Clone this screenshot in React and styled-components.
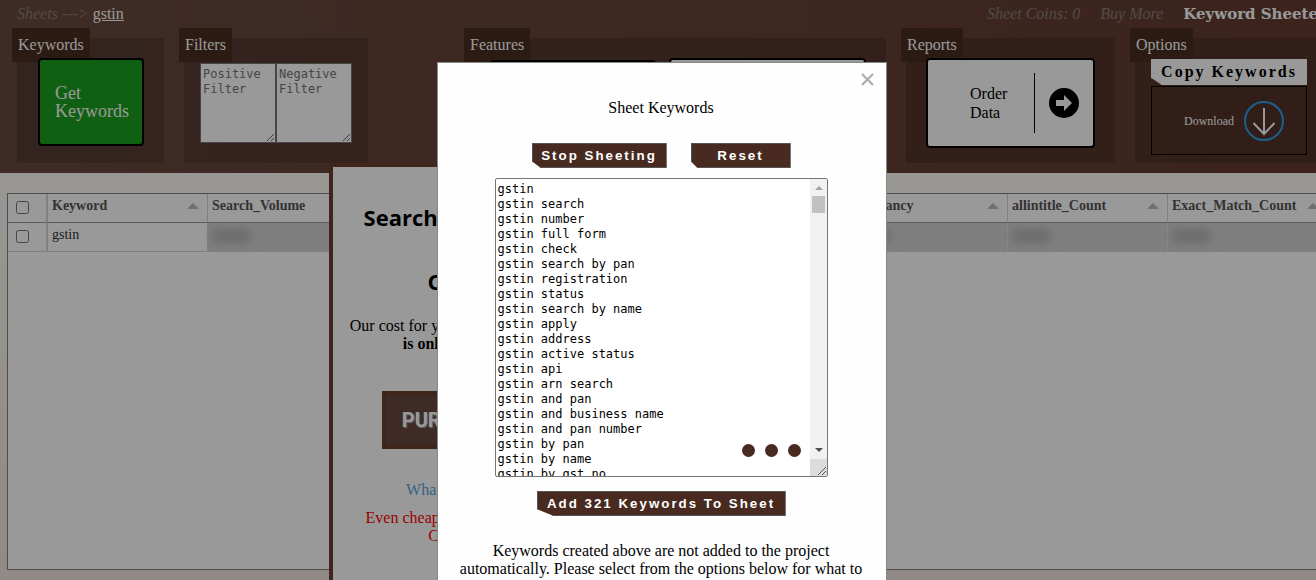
import React from "react";
import styled, { createGlobalStyle, css } from "styled-components";

const SERIF = '"Liberation Serif", serif';
const SANS = '"Liberation Sans", sans-serif';
const MONO = '"DejaVu Sans Mono", monospace';
const BROWN = "#482a20";

const GlobalStyle = createGlobalStyle`
  * { box-sizing: border-box; }
  html, body { margin: 0; height: 100%; }
  body {
    overflow: hidden;
    font: 16px/18px ${SERIF};
    color: #000;
  }
  #root { height: 100%; }
  p, h2 { margin: 0; }
`;

const Page = styled.div`
  position: relative;
  display: flex;
  flex-direction: column;
  min-height: 100%;
  overflow: hidden;
  background: linear-gradient(to bottom, #fffcf6 30%, #f2e6e0);
`;

const Header = styled.header`
  padding-bottom: 10px;
  background: linear-gradient(100deg, #69493f, #643c30);
`;

const TopBar = styled.div`
  display: flex;
  align-items: center;
  height: 28px;
  padding-left: 17px;
  overflow: hidden;
  white-space: nowrap;
`;

const Crumbs = styled.nav`
  display: flex;
  gap: 4px;
  flex: 1;
  color: #8a7e7a;
  font-style: italic;
  a:last-child {
    color: #fff;
    font-style: normal;
  }
`;

const CrumbLink = styled.a`
  color: inherit;
  text-decoration: ${(p) => (p.$current ? "underline" : "none")};
`;

const Account = styled.div`
  display: flex;
  gap: 20px;
  width: 329px;
  color: #8a7e7a;
  font-style: italic;
`;

const Brand = styled.strong`
  color: #fff;
  font: bold 15px/18px "DejaVu Serif", serif;
`;

const Groups = styled.div`
  display: flex;
  gap: 20px;
  padding: 10px 0 0 17px;
`;

const Group = styled.section`
  position: relative;
  display: flex;
  align-items: flex-start;
  flex: none;
  gap: ${(p) => p.$gap || 0}px;
  width: ${(p) => p.$width}px;
  height: 125px;
  padding: ${(p) => p.$pad};
  margin-left: ${(p) => (p.$push ? "auto" : "0")};
  background: rgba(0, 0, 0, 0.16);
`;

const GroupLabel = styled.h3`
  position: absolute;
  left: -5px;
  top: -10px;
  margin: 0;
  padding: 8px 6px;
  background: #492d20;
  color: #fff;
  font: 16px/18px ${SERIF};
`;

const bigButton = css`
  position: relative;
  border: 2px solid #000;
  border-radius: 4px;
  font-family: ${SERIF};
  text-align: left;
`;

const GetButton = styled.button`
  ${bigButton}
  width: 106px;
  height: 88px;
  padding: 0 0 0 15px;
  background: #19a11e;
  color: #fff;
  font-size: 18px;
  line-height: 18px;
`;

const Filter = styled.textarea`
  width: 76px;
  height: 80px;
  margin: 0;
  padding: 3px 2px;
  border: 1px solid #767676;
  border-radius: 0;
  background: #fff;
  font: 12px/15px ${MONO};
  overflow: hidden;
  &::placeholder { color: #757575; }
`;

const FeatureButton = styled.button`
  ${bigButton}
  width: ${(p) => p.$width}px;
  height: 88px;
  margin-top: ${(p) => (p.$dark ? "2px" : "0")};
  background: ${(p) => (p.$dark ? "#000" : "#fff")};
`;

const OrderButton = styled.button`
  ${bigButton}
  display: flex;
  align-items: center;
  width: 169px;
  height: 90px;
  padding: 0 14px 0 42px;
  background: #fff;
  font-size: 16px;
  line-height: 19px;
`;

const OrderText = styled.span`
  flex: 1;
`;

const OrderIcon = styled.span`
  display: flex;
  align-items: center;
  height: 60px;
  padding-left: 14px;
  border-left: 1px solid #000;
`;

const OptionList = styled.div`
  position: relative;
  display: flex;
  flex-direction: column;
  gap: 1px;
  width: 100%;
`;

const ribbon = css`
  border: 1px solid #555;
  letter-spacing: 2px;
  font-weight: bold;
  padding: 0;
  white-space: nowrap;
  clip-path: polygon(0 0, 100% 0, 100% 100%, 7% 100%, 0 72%);
`;

const CopyButton = styled.button`
  ${ribbon}
  height: 26px;
  border-color: #fff;
  background: #fff;
  color: #000;
  font-family: ${SERIF};
  font-size: 16px;
`;

const DownloadButton = styled.button`
  display: flex;
  align-items: center;
  justify-content: flex-end;
  gap: 10px;
  height: 69px;
  padding: 0 22px 0 0;
  border: 1px solid #000;
  background: transparent;
  color: #fff;
  font: 12px/14px ${SERIF};
`;

const Main = styled.main`
  flex: 1;
  padding: 20px 0 10px 7px;
`;

const Grid = styled.div`
  min-height: 377px;
  overflow: hidden;
  border: 1px solid #808080;
  border-right: 0;
  background: #fff;
`;

const Table = styled.table`
  width: 1320px;
  table-layout: fixed;
  border-collapse: separate;
  border-spacing: 0;
  font-size: 14px;
  line-height: 16px;
`;

const Th = styled.th`
  height: 29px;
  padding: 4px;
  border-right: ${(p) => (p.$check ? 2 : 1)}px solid #d5d5d5;
  border-bottom: 1px solid #999;
  text-align: left;
  vertical-align: top;
  color: #555;
  width: ${(p) => (p.$check ? 40 : 160)}px;
`;

const HeadCell = styled.span`
  display: flex;
  justify-content: space-between;
  padding-right: 4px;
`;

const SortArrow = styled.span`
  margin-top: 5px;
  height: 6px;
  border: 6px solid transparent;
  border-top: 0;
  border-bottom-color: #bbb;
`;

const Td = styled.td`
  height: 29px;
  padding: 4px;
  vertical-align: top;
  color: #333;
  border-right: ${(p) => (p.$check ? 2 : 1)}px solid ${(p) => (p.$masked ? "#e2e2e2" : "#d5d5d5")};
  border-bottom: 1px solid #d5d5d5;
  background: ${(p) => (p.$masked ? "#d4d4d4" : "#fff")};
`;

const Masked = styled.span`
  display: block;
  width: 38px;
  height: 14px;
  margin-top: 2px;
  background: #b4b4b4;
  filter: blur(5px);
`;

const Check = styled.input`
  display: block;
  width: 13px;
  height: 13px;
  margin: 3px 0 0 4px;
`;

const Offer = styled.aside`
  position: absolute;
  left: 25%;
  top: 163px;
  bottom: -20px;
  width: 334px;
  padding-top: 34px;
  border: 4px solid #6c3f31;
  background: #fff;
  display: flex;
  flex-direction: column;
  align-items: center;
  text-align: center;
  white-space: nowrap;
`;

const OfferTitle = styled.h2`
  margin-bottom: 32px;
  font: bold 22px/32px "Open Sans", sans-serif;
  & + & { margin-bottom: 20px; }
`;

const PurchaseButton = styled.button`
  width: 228px;
  height: 58px;
  margin: 38px 0 32px;
  border: 4px solid #6c3f31;
  background: #69493f;
  color: #fff;
  font: bold 20px/24px Roboto, sans-serif;
  text-shadow: 1px 1px 1px #aaa;
`;

const HelpLink = styled.a`
  margin-bottom: 10px;
  color: #55a5dc;
  text-decoration: none;
`;

const Discount = styled.p`
  color: #f00;
`;

const Overlay = styled.div`
  position: fixed;
  inset: 0;
  display: flex;
  justify-content: center;
  align-items: flex-start;
  padding: 62px 0 0 8px;
  overflow: hidden;
  background: rgba(0, 0, 0, 0.4);
`;

const Dialog = styled.div`
  position: relative;
  flex: none;
  display: flex;
  flex-direction: column;
  align-items: center;
  width: 450px;
  padding: 36px 21px 40px 19px;
  border: 1px solid #888;
  background: #fefefe;
  text-align: center;
`;

const CloseButton = styled.button`
  position: absolute;
  right: 12px;
  top: 10px;
  display: flex;
  padding: 0;
  border: 0;
  background: none;
`;

const DialogActions = styled.div`
  display: flex;
  gap: 24px;
  margin: 26px 0 10px;
`;

const RibbonButton = styled.button`
  ${ribbon}
  width: ${(p) => p.$width}px;
  height: 25px;
  background: ${BROWN};
  color: #fff;
  font-family: ${SANS};
`;

const KeywordBox = styled.div`
  position: relative;
  display: flex;
  width: 333px;
  height: 299px;
  margin-bottom: 14px;
  border: 1px solid #767676;
  border-radius: 2px;
  background: #fff;
`;

const KeywordText = styled.textarea`
  flex: 1;
  min-width: 0;
  padding: 3px 2px 0;
  border: 0;
  outline: 0;
  resize: none;
  overflow: hidden;
  background: transparent;
  color: #000;
  font: 12px/15px ${MONO};
`;

const ScrollTrack = styled.div`
  display: flex;
  flex-direction: column;
  align-items: center;
  width: 17px;
  background: #f1f1f1;
`;

const ScrollThumb = styled.div`
  width: 13px;
  height: 17px;
  margin-bottom: auto;
  background: #c1c1c1;
`;

const ScrollCorner = styled.div`
  width: 17px;
  height: 17px;
  background: #dcdcdc;
`;

const Dots = styled.div`
  position: absolute;
  right: 26px;
  bottom: 19px;
  display: flex;
  gap: 10px;
`;

const Dot = styled.span`
  width: 13px;
  height: 13px;
  border-radius: 50%;
  background: ${BROWN};
`;

const Note = styled.p`
  margin-top: 26px;
`;

const keywords = [
  "gstin",
  "gstin search",
  "gstin number",
  "gstin full form",
  "gstin check",
  "gstin search by pan",
  "gstin registration",
  "gstin status",
  "gstin search by name",
  "gstin apply",
  "gstin address",
  "gstin active status",
  "gstin api",
  "gstin arn search",
  "gstin and pan",
  "gstin and business name",
  "gstin and pan number",
  "gstin by pan",
  "gstin by name",
  "gstin by gst no",
];

const columns = [
  "Keyword",
  "Search_Volume",
  "CPC",
  "Competition",
  "Trend",
  "Relevancy",
  "allintitle_Count",
  "Exact_Match_Count",
];

function ArrowCircle() {
  return (
    <svg width="30" height="30" viewBox="0 0 30 30" aria-hidden="true">
      <circle cx="15" cy="15" r="15" fill="#000" />
      <path d="M7 12h8V7l8 8-8 8v-5H7z" fill="#fff" />
    </svg>
  );
}

function DownloadIcon() {
  return (
    <svg width="40" height="40" viewBox="0 0 40 40" fill="none" aria-hidden="true">
      <circle cx="20" cy="20" r="19" stroke="#2f9fee" strokeWidth="2" />
      <path d="M20 7v26M9.500 22L20 33l10.500-11" stroke="#fff" strokeWidth="2" />
    </svg>
  );
}

function ScrollArrow({ down }) {
  return (
    <svg width="17" height="17" viewBox="0 0 17 17" aria-hidden="true">
      <path
        d={down ? "M5 6h8l-4 4z" : "M5 11h8L9 7z"}
        fill={down ? "#505050" : "#a3a3a3"}
      />
    </svg>
  );
}

export default function App() {
  return (
    <>
      <GlobalStyle />
      <Page>
        <Header>
          <TopBar>
            <Crumbs>
              <CrumbLink href="#sheets">Sheets</CrumbLink>
              <span>---&gt;</span>
              <CrumbLink href="#gstin" $current>gstin</CrumbLink>
            </Crumbs>
            <Account>
              <span>Sheet Coins: 0</span>
              <CrumbLink href="#buy">Buy More</CrumbLink>
              <Brand>Keyword Sheeter</Brand>
            </Account>
          </TopBar>
          <Groups>
            <Group $width={147} $pad="20px 0 0 21px">
              <GroupLabel>Keywords</GroupLabel>
              <GetButton>Get<br />Keywords</GetButton>
            </Group>
            <Group $width={184} $pad="25px 0 0 16px">
              <GroupLabel>Filters</GroupLabel>
              <Filter placeholder="Positive Filter" aria-label="Positive Filter" />
              <Filter placeholder="Negative Filter" aria-label="Negative Filter" />
            </Group>
            <Group $width={417} $pad="20px 20px 0 21px" $gap={13} $push>
              <GroupLabel>Features</GroupLabel>
              <FeatureButton $width={166} $dark aria-label="Sheet keywords" />
              <FeatureButton $width={197} aria-label="Search volume" />
            </Group>
            <Group $width={209} $pad="20px 0 0 20px">
              <GroupLabel>Reports</GroupLabel>
              <OrderButton>
                <OrderText>Order<br />Data</OrderText>
                <OrderIcon><ArrowCircle /></OrderIcon>
              </OrderButton>
            </Group>
            <Group $width={181} $pad="21px 9px 0 16px">
              <GroupLabel>Options</GroupLabel>
              <OptionList>
                <CopyButton>Copy Keywords</CopyButton>
                <DownloadButton>Download<DownloadIcon /></DownloadButton>
              </OptionList>
            </Group>
          </Groups>
        </Header>

        <Main>
          <Grid>
            <Table>
              <thead>
                <tr>
                  <Th $check><Check type="checkbox" aria-label="Select all rows" /></Th>
                  {columns.map((name) => (
                    <Th key={name}>
                      <HeadCell>{name}<SortArrow /></HeadCell>
                    </Th>
                  ))}
                </tr>
              </thead>
              <tbody>
                <tr>
                  <Td $check><Check type="checkbox" aria-label="Select gstin" /></Td>
                  <Td>gstin</Td>
                  {columns.slice(1).map((name) => (
                    <Td key={name} $masked><Masked /></Td>
                  ))}
                </tr>
              </tbody>
            </Table>
          </Grid>
        </Main>

        <Offer>
          <OfferTitle>Search Volume, CPC and</OfferTitle>
          <OfferTitle>Competition</OfferTitle>
          <p>
            Our cost for your total sheet of keyword data:<br />
            <b>is only $0.005 per keyword.</b>
          </p>
          <PurchaseButton>PURCHASE CREDITS</PurchaseButton>
          <HelpLink href="#help">What is Search Volume for?</HelpLink>
          <Discount>
            Even cheaper with a full bundle of Sheet<br />
            Coins in your project
          </Discount>
        </Offer>
      </Page>

      <Overlay>
        <Dialog role="dialog" aria-label="Sheet Keywords">
          <CloseButton aria-label="Close">
            <svg width="13" height="13" viewBox="0 0 13 13" aria-hidden="true">
              <path d="M1 1l11 11M12 1L1 12" stroke="#aaa" strokeWidth="2" />
            </svg>
          </CloseButton>
          <p>Sheet Keywords</p>
          <DialogActions>
            <RibbonButton $width={135}>Stop Sheeting</RibbonButton>
            <RibbonButton $width={100}>Reset</RibbonButton>
          </DialogActions>
          <KeywordBox>
            <KeywordText readOnly aria-label="Keywords" value={keywords.join("\n")} />
            <ScrollTrack>
              <ScrollArrow />
              <ScrollThumb />
              <ScrollArrow down />
              <ScrollCorner>
                <svg width="17" height="17" viewBox="0 0 17 17" aria-hidden="true">
                  <path d="M8 16l8-8M12 16l4-4" stroke="#555" />
                </svg>
              </ScrollCorner>
            </ScrollTrack>
            <Dots><Dot /><Dot /><Dot /></Dots>
          </KeywordBox>
          <RibbonButton $width={249}>Add 321 Keywords To Sheet</RibbonButton>
          <Note>
            Keywords created above are not added to the project automatically.
            Please select from the options below for what to do with them.
          </Note>
        </Dialog>
      </Overlay>
    </>
  );
}
